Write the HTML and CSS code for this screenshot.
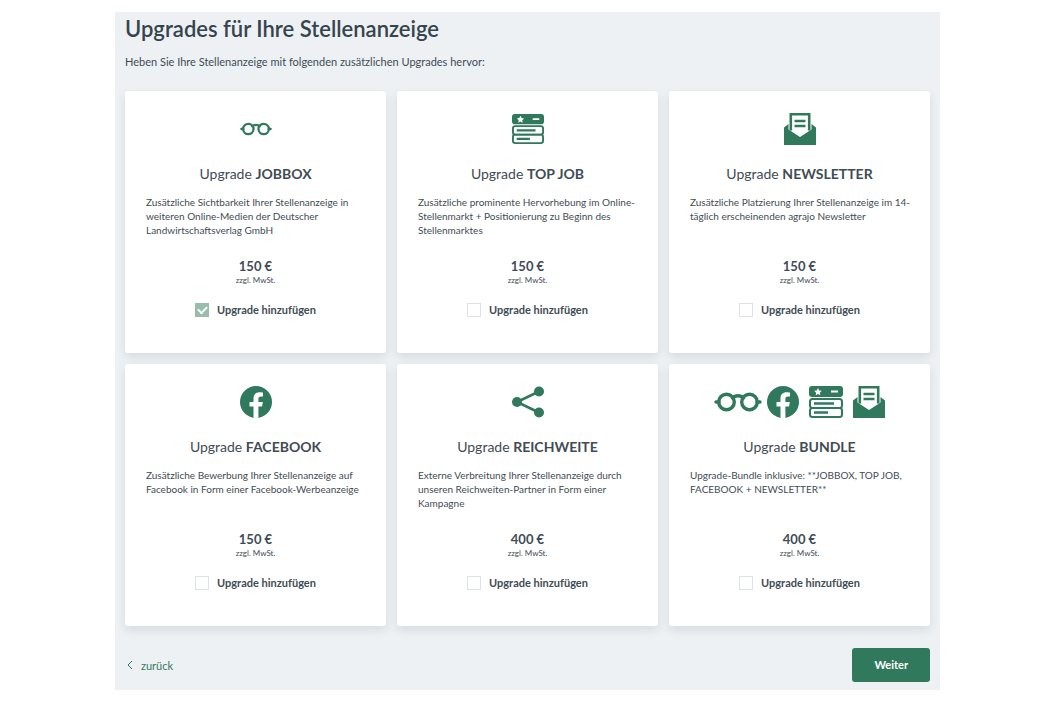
FILE: index.html
```html
<!DOCTYPE html>
<html lang="de">
<head>
<meta charset="utf-8">
<meta name="viewport" content="width=device-width, initial-scale=1">
<title>Upgrades für Ihre Stellenanzeige</title>
<link rel="stylesheet" href="styles.css">
</head>
<body>
<svg class="sprite" aria-hidden="true">
  <symbol id="glasses" viewBox="0 0 48 20">
    <g fill="none" stroke="currentColor" stroke-width="3.400">
      <circle cx="12.500" cy="10" r="7.800"/>
      <circle cx="35.500" cy="10" r="7.800"/>
      <path d="M18.500 6c2.500-3 8.500-3 11 0M2 10h3M43 10h3" stroke-linecap="round"/>
    </g>
  </symbol>
  <symbol id="listing" viewBox="0 0 34 32">
    <rect width="34" height="11" rx="3" fill="currentColor"/>
    <path fill="#fff" d="M9 2l1.200 2.400 2.600.4-1.900 1.900.4 2.600L9 8.100 6.700 9.300l.4-2.600-1.900-1.900 2.600-.4zM22 4.500h7v2h-7z"/>
    <g fill="none" stroke="currentColor" stroke-width="2">
      <rect x="1" y="13" width="32" height="9" rx="2.500"/>
      <rect x="1" y="22" width="32" height="9" rx="2.500"/>
      <path d="M5 17.500h20M5 26.500h14" stroke-width="2.400"/>
    </g>
  </symbol>
  <symbol id="newsletter" viewBox="0 0 32 32">
    <path fill="currentColor" d="M0 14.500L4.500 11v5.500L16 24l11.500-7.500V11l4.500 3.500V32H0z"/>
    <path fill="none" stroke="currentColor" stroke-width="2.600" d="M6.800 17.500V1.300h18.400v16.200"/>
    <path fill="none" stroke="currentColor" stroke-width="2.600" d="M10.500 8h11M10.500 13h11"/>
  </symbol>
  <symbol id="facebook" viewBox="0 0 32 32">
    <circle cx="16" cy="16" r="16" fill="currentColor"/>
    <path fill="#fff" d="M13.500 32V20.500h-4V16h4v-3.500c0-4 2.400-6.200 6-6.200 1.700 0 3.500.3 3.500.3v3.900h-2c-2 0-2.600 1.200-2.600 2.500v3h4.400l-.7 4.500h-3.700V32z"/>
  </symbol>
  <symbol id="share" viewBox="0 0 32 32">
    <path d="M27 5.500L5 16l22 10.500" fill="none" stroke="currentColor" stroke-width="2.600"/>
    <g fill="currentColor"><circle cx="5" cy="16" r="5"/><circle cx="27" cy="5.500" r="5"/><circle cx="27" cy="26.500" r="5"/></g>
  </symbol>
</svg>

<main class="panel">
  <h1 class="title">Upgrades für Ihre Stellenanzeige</h1>
  <p class="intro">Heben Sie Ihre Stellenanzeige mit folgenden zusätzlichen Upgrades hervor:</p>

  <form class="form">
    <div class="grid">
      <article class="card">
        <div class="icons"><svg class="icon"><use href="#glasses"/></svg></div>
        <h2 class="name">Upgrade <strong>JOBBOX</strong></h2>
        <p class="text">Zusätzliche Sichtbarkeit Ihrer Stellenanzeige in weiteren Online-Medien der Deutscher Landwirtschaftsverlag GmbH</p>
        <p class="price">150 €</p>
        <p class="tax">zzgl. MwSt.</p>
        <label class="option"><input class="check" type="checkbox" checked> Upgrade hinzufügen</label>
      </article>
      <article class="card">
        <div class="icons"><svg class="icon"><use href="#listing"/></svg></div>
        <h2 class="name">Upgrade <strong>TOP JOB</strong></h2>
        <p class="text">Zusätzliche prominente Hervorhebung im Online-Stellenmarkt + Positionierung zu Beginn des Stellenmarktes</p>
        <p class="price">150 €</p>
        <p class="tax">zzgl. MwSt.</p>
        <label class="option"><input class="check" type="checkbox"> Upgrade hinzufügen</label>
      </article>
      <article class="card">
        <div class="icons"><svg class="icon"><use href="#newsletter"/></svg></div>
        <h2 class="name">Upgrade <strong>NEWSLETTER</strong></h2>
        <p class="text">Zusätzliche Platzierung Ihrer Stellenanzeige im 14-<wbr>täglich erscheinenden agrajo Newsletter</p>
        <p class="price">150 €</p>
        <p class="tax">zzgl. MwSt.</p>
        <label class="option"><input class="check" type="checkbox"> Upgrade hinzufügen</label>
      </article>
      <article class="card">
        <div class="icons"><svg class="icon"><use href="#facebook"/></svg></div>
        <h2 class="name">Upgrade <strong>FACEBOOK</strong></h2>
        <p class="text">Zusätzliche Bewerbung Ihrer Stellenanzeige auf Facebook in Form einer Facebook-Werbeanzeige</p>
        <p class="price">150 €</p>
        <p class="tax">zzgl. MwSt.</p>
        <label class="option"><input class="check" type="checkbox"> Upgrade hinzufügen</label>
      </article>
      <article class="card">
        <div class="icons"><svg class="icon"><use href="#share"/></svg></div>
        <h2 class="name">Upgrade <strong>REICHWEITE</strong></h2>
        <p class="text">Externe Verbreitung Ihrer Stellenanzeige durch unseren Reichweiten-Partner in Form einer Kampagne</p>
        <p class="price">400 €</p>
        <p class="tax">zzgl. MwSt.</p>
        <label class="option"><input class="check" type="checkbox"> Upgrade hinzufügen</label>
      </article>
      <article class="card">
        <div class="icons">
          <svg class="icon icon-wide"><use href="#glasses"/></svg>
          <svg class="icon"><use href="#facebook"/></svg>
          <svg class="icon icon-listing"><use href="#listing"/></svg>
          <svg class="icon"><use href="#newsletter"/></svg>
        </div>
        <h2 class="name">Upgrade <strong>BUNDLE</strong></h2>
        <p class="text">Upgrade-Bundle inklusive: **JOBBOX, TOP JOB, FACEBOOK + NEWSLETTER**</p>
        <p class="price">400 €</p>
        <p class="tax">zzgl. MwSt.</p>
        <label class="option"><input class="check" type="checkbox"> Upgrade hinzufügen</label>
      </article>
    </div>

    <div class="actions">
      <a class="back" href="#"><svg class="chevron" viewBox="0 0 6 10"><path d="M5 1L1 5l4 4" fill="none" stroke="currentColor"/></svg>zurück</a>
      <button class="next" type="submit">Weiter</button>
    </div>
  </form>
</main>
</body>
</html>
```

FILE: styles.css
```css
* {
  box-sizing: border-box;
}

body {
  margin: 0;
  padding: 12px 114px 13px 115px;
  background: #fff;
  color: #3f4c55;
  font-family: Lato, "Liberation Sans", sans-serif;
  font-size: 10px;
}

h1, h2, p {
  margin: 0;
}

.sprite {
  display: none;
}

.panel {
  padding: 4px 10px 8px;
  background: #edf1f4;
}

.title {
  color: #36444d;
  font-size: 22px;
  line-height: 26px;
  font-weight: 600;
}

.intro {
  margin-top: 12px;
  font-size: 11px;
  line-height: 16px;
}

.grid {
  display: grid;
  grid-template-columns: repeat(3, minmax(0, 1fr));
  gap: 11px;
  margin-top: 21px;
}

.card {
  display: flex;
  flex-direction: column;
  min-height: 262px;
  padding: 20px 16px 35px;
  background: #fff;
  border-radius: 3px;
  box-shadow: 0 4px 10px rgba(54, 68, 77, 0.12);
}

.icons {
  display: flex;
  justify-content: center;
  align-items: center;
  gap: 5px;
  height: 36px;
}

.icon {
  width: 32px;
  height: 32px;
  color: #31795c;
}

.icon-wide {
  width: 48px;
}

.icon-listing {
  width: 34px;
  margin: 0 5px;
}

.name {
  margin-top: 17px;
  font-size: 14px;
  line-height: 20px;
  font-weight: 400;
  text-align: center;
}

.name strong {
  font-weight: 700;
}

.text {
  margin-top: 11px;
  padding-left: 5px;
  line-height: 14px;
}

.price {
  margin-top: auto;
  font-size: 13px;
  line-height: 16px;
  font-weight: 700;
  text-align: center;
}

.tax {
  font-size: 8px;
  line-height: 12px;
  text-align: center;
}

.option {
  display: flex;
  justify-content: center;
  align-items: center;
  gap: 8px;
  margin-top: 16px;
  font-size: 11px;
  line-height: 16px;
  font-weight: 700;
}

.check {
  appearance: none;
  width: 14px;
  height: 14px;
  margin: 0;
  border: 1px solid #dce2e8;
  background: #fff;
}

.check:checked {
  display: grid;
  place-items: center;
  border-color: #98bcae;
  background: #98bcae;
}

.check:checked::before {
  content: "";
  width: 7px;
  height: 4px;
  margin-bottom: 2px;
  border: solid #fff;
  border-width: 0 0 2px 2px;
  transform: rotate(-45deg);
}

.actions {
  display: flex;
  justify-content: space-between;
  align-items: center;
  margin-top: 22px;
}

.back {
  display: flex;
  align-items: center;
  gap: 8px;
  padding-left: 2px;
  color: #31795c;
  font-size: 11px;
  text-decoration: none;
}

.chevron {
  width: 6px;
  height: 10px;
}

.next {
  padding: 9px 22px;
  border: 0;
  border-radius: 3px;
  background: #31795c;
  color: #fff;
  font: 700 11px/16px Lato, "Liberation Sans", sans-serif;
}
```
